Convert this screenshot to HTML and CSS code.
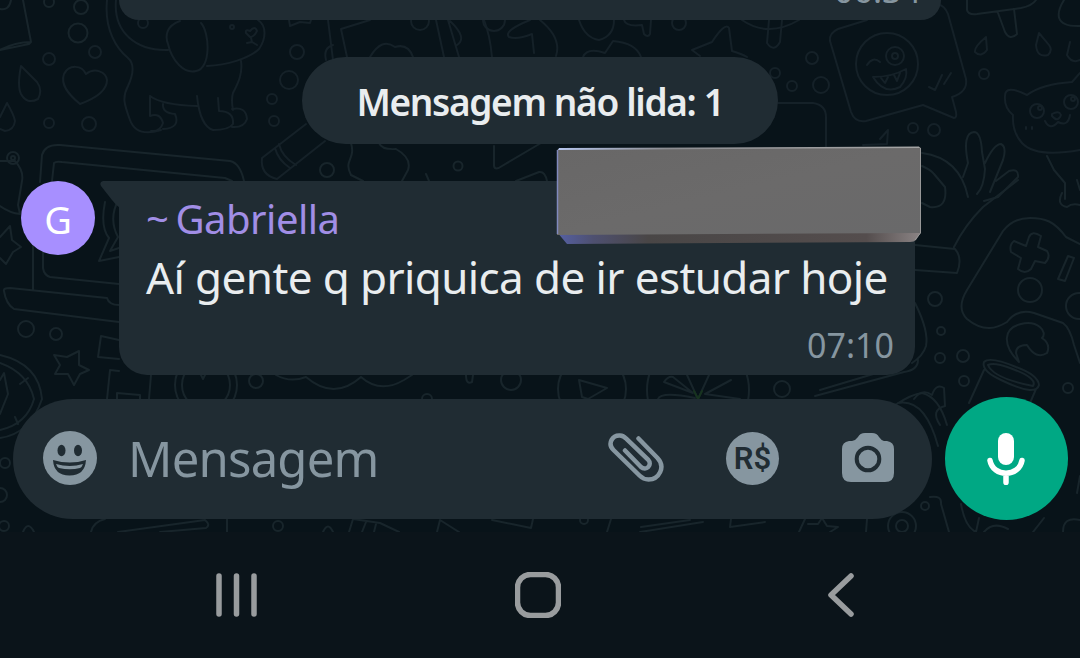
FILE: index.html
```
<!DOCTYPE html>
<html lang="pt-BR">
<head>
    <meta charset="utf-8">
    <title>Conversa</title>
    <link rel="stylesheet" href="styles.css">
</head>
<body>
    <div class="chat">
        <svg class="doodles" viewBox="0 0 1080 532" width="1080" height="532">
            <!-- top left: card, bubbles, drops, heart -->
            <path d="M23 0 L31 42 Q15 42 0 50 M31 42 L29 44 L0 50 M0 9 Q9 11 11 0"/>
            <circle cx="49" cy="2" r="5"/><circle cx="81" cy="7" r="7"/><circle cx="78" cy="33" r="9.500"/>
            <g class="faint">
                <circle cx="95" cy="52" r="6"/><circle cx="49" cy="59" r="6"/><circle cx="49" cy="123" r="5"/><circle cx="89" cy="124" r="7"/>
                <path d="M21 66 Q17 86 21 94 Q27 105 38 99 Q43 90 37 82 Z M7 103 L0 117 M7 103 Q14 115 15 121 Q14 130 5 131 L0 129"/>
                <path d="M80 104 C69 95 60 85 64 74 C69 64 82 65 86 74 C95 67 106 72 107 80 C107 93 91 100 80 104 Z"/>
                <!-- dog -->
                <path d="M107 0 C104 30 117 49 128 58 C135 64 133 75 128 86 C122 97 124 104 130 120 C135 134 148 134 161 130"/>
                <path d="M116 0 C113 33 137 51 168 50 M180 21 C166 26 165 36 168 44 C172 61 184 74 196 71 C211 69 210 33 201 23 M207 66 C226 65 249 59 259 49 C266 39 267 26 258 20 M241 61 C243 75 237 85 233 93 Q231 99 233 110"/>
                <path d="M150 96 Q162 105 197 106 M150 96 L150 116 Q160 112 163 123 Q160 132 151 131 M163 104 Q162 113 175 114 Q181 128 163 129 M197 96 C199 116 205 128 213 130 Q229 130 233 124 Q234 111 219 111 L218 98 M232 109 Q246 106 247 119 Q244 128 232 127"/>
                <path d="M246 33 Q245 29 250 31 Q255 25 257 31 Q254 37 250 37 Z M251 38 L252 42 L247 43 M252 42 L257 45"/>
                <circle cx="143" cy="23" r="5"/><circle cx="232" cy="27" r="2"/>
                <circle cx="297" cy="52" r="7"/><circle cx="289" cy="80" r="9"/><circle cx="272" cy="99" r="5"/><circle cx="274" cy="121" r="5"/>
                <path d="M289 20 L290 26 L300 22 L310 23 L312 17 M333 60 L328 20 M370 20 L341 29 L347 57 M326 60 Q323 48 333 45"/>
                <path d="M306 124 L262 158 Q260 175 277 179 L325 141 M275 148 Q278 160 290 168 M279 144 Q282 157 296 165"/>
            </g>
            <!-- between the first bubble and the pill -->
            <g class="faint">
                <path d="M370 57 Q382 37 395 47 Q408 43 413 57 M436 20 L444 57 M448 20 L459 57 M450 21 Q468 38 457 45 M484 20 Q490 35 492 57 M530 20 Q503 31 509 37 Q517 40 532 34 L534 53 M540 20 Q562 38 556 56"/>
                <path d="M579 20 Q585 38 599 40 Q614 36 614 20 M624 20 Q626 27 642 25 L644 34 Q648 38 650 34 L651 20 M583 57 Q587 47 605 53 L613 41 Q636 43 641 57"/>
                <path d="M692 50 L712 42 Q725 22 729 28 L732 51 Q742 54 747 57 M692 50 L700 56"/>
                <circle cx="420" cy="21" r="9"/><circle cx="494" cy="20" r="11"/><circle cx="679" cy="23" r="7"/>
                <path d="M742 20 Q768 38 799 20 M769 20 L767 43 Q774 53 780 42 L782 20"/>
            </g>
            <g>
                <circle cx="327" cy="170" r="7"/><circle cx="458" cy="166" r="4.500"/>
                <path d="M351 143 C356 160 343 160 351 175 L363 181 M379 143 Q382 150 396 149 Q412 158 408 170 L402 181 M494 146 L494 166 Q495 171 502 166 L541 143 M426 174 L429 181 M516 181 L539 172 Q545 171 547 181"/>
            </g>
            <!-- top right: winking sticker -->
            <g class="faint">
                <path d="M867 20 L838 29 Q829 33 830 41 L851 112 Q855 123 866 121 L923 105 L954 118 Q957 118 956 112 L952 97 Q968 92 966 79 L948 14 Q944 4 937 5"/>
                <circle cx="887" cy="64" r="31"/><circle cx="895" cy="56" r="9"/><circle cx="895" cy="56" r="3"/>
                <path d="M867 65 Q873 56 880 62 M873 77 Q892 77 906 69 Q908 78 900 87 Q884 95 873 77 M881 78 L885 83 L888 77 M894 75 L897 81 L900 73 M929 87 L935 90 L942 75 M944 84 L951 73"/>
                <circle cx="812" cy="58" r="6"/><circle cx="821" cy="85" r="8"/><circle cx="792" cy="86" r="5"/><circle cx="775" cy="73" r="5"/><circle cx="984" cy="74" r="5"/><circle cx="913" cy="128" r="5"/><circle cx="934" cy="130" r="6"/>
                <path d="M778 103 L813 103 Q826 105 826 117 L826 147 M863 145 L887 144 L888 130 L880 139"/>
                <path d="M986 37 Q974 47 975 52 Q981 58 987 50 Z M1039 33 L1036 45 Q1037 58 1048 55 Q1053 50 1049 45 Z M1070 42 L1067 55 Q1072 64 1080 60"/>
                <!-- bear -->
                <path d="M1027 95 Q1005 84 1005 96 Q1004 108 1013 115 Q1012 132 1022 143 Q1036 158 1080 150 M1027 95 Q1042 84 1072 82 L1080 73"/>
                <circle cx="1037" cy="111" r="7"/><circle cx="1040" cy="108" r="2"/><circle cx="1071" cy="102" r="7"/><circle cx="1073" cy="99" r="2"/>
                <path d="M1052 114 Q1059 110 1061 115 Q1058 123 1052 116 Z M1045 121 Q1050 131 1058 122 Q1068 127 1070 115 M1026 127 L1026 129 M1032 127 L1032 129"/>
            </g>
            <path d="M967 0 L967 10 Q968 15 977 14 L1021 8 Q1032 6 1036 0 M998 13 L1005 32 Q1010 41 1017 34 L1014 9 M1064 0 C1056 13 1054 27 1080 26"/>
            <!-- hand and headphones -->
            <path d="M922 153 Q960 158 968 197 M922 166 Q931 170 934 174 L945 187 Q948 209 930 207 L922 203 M963 177 L968 163 Q962 133 974 132 Q981 132 982 152 L985 169 Q984 187 977 194 M985 163 Q994 144 1001 144 Q1007 147 1003 160 L990 192 M996 181 L1009 171 Q1019 168 1018 177 L998 197 L984 201 M1047 156 L1054 170 L1065 183 L1065 199 M1062 193 Q1056 205 1067 207 Q1072 203 1080 205 M1077 180 L1080 190"/>
            <path d="M1018 180 L983 207 Q965 225 954 247 M915 245 L955 249 Q963 258 957 273 L915 270"/>
            <!-- game controller -->
            <path d="M1080 244 L1066 237 C1054 221 1045 218 1030 218 Q1013 218 1003 231 L967 290 Q956 308 967 319 C984 333 997 328 1007 322 Q1018 308 1034 313 L1063 323 Q1070 328 1074 345 L1080 363"/>
            <path d="M1029 237 Q1032 230 1041 236 L1038 247 L1047 251 Q1051 257 1045 263 L1035 261 L1031 269 Q1025 275 1018 269 L1021 258 L1011 252 Q1009 245 1014 241 L1026 246 Z M1068 256 L1074 258 L1065 281 L1058 279 Z"/>
            <circle cx="1030" cy="290" r="12"/><circle cx="1079" cy="306" r="13"/>
            <circle cx="935" cy="299" r="7"/><circle cx="941" cy="331" r="4"/><circle cx="940" cy="358" r="5"/><circle cx="963" cy="356" r="6"/><circle cx="964" cy="381" r="5"/><circle cx="1068" cy="388" r="5"/>
            <path d="M1019 362 C1002 345 1003 328 1021 324 C1038 320 1048 332 1042 338 Q1051 344 1047 353 Q1036 360 1027 345 Q1016 345 1016 353 Z"/>
            <path d="M984 362 Q981 371 1001 380 Q1036 397 1039 385 Q1038 375 1016 367 Q990 356 984 362 Z M988 365 Q993 378 1033 386 Q1038 378 1010 368 Q994 362 988 365 M984 370 L969 403 M1036 389 L1030 403"/>
            <path d="M915 303 Q929 331 926 346 Q923 356 912 363 M918 360 Q918 370 904 372 L815 396 M820 390 L900 366 M914 399 Q922 388 932 395 Q936 383 944 388 L945 406 Q930 410 940 425"/>
            <!-- left: laptop, star, clock -->
            <path d="M40 182 L42 155 Q45 144 60 145 L230 161 Q240 163 244 181 M52 181 L54 163 Q56 161 62 162 L225 178 L232 181"/>
            <path d="M0 161 L15 161 Q24 171 22 181 L18 205 L20 214 Q10 213 0 206"/><circle cx="13" cy="158" r="6"/><circle cx="13" cy="158" r="2"/>
            <path d="M0 237 L10 226 L12 240 L21 247 L13 252 L6 264 L0 258 M33 224 L33 290 M43 250 L43 268 Q44 275 50 277 L119 284 M4 291 Q3 288 10 288 L107 298 Q109 305 119 305 M4 291 Q6 304 14 309 L119 322 M105 202 Q100 227 109 238 L99 261 L119 257 M119 199 Q108 218 118 237 L110 251 L119 248"/>
            <circle cx="26" cy="329" r="8"/><circle cx="56" cy="334" r="6"/>
            <path d="M79 351 L79 365 L89 370 L80 374 L74 385 L68 374 L55 374 L60 365 L54 355 L67 357 Z M119 340 L101 336 L98 357 L119 359 M119 371 L110 370 L107 399 M151 375 L149 399"/>
            <path d="M0 355 Q39 364 42 399 Q30 434 0 438 M0 363 Q28 373 34 399 Q27 424 0 430 M0 380 L4 373 L8 394 L0 414 M20 384 L28 378 M15 417 L18 424"/>
            <circle cx="206" cy="385" r="31"/><circle cx="206" cy="385" r="24"/><circle cx="256" cy="381" r="7"/>
            <path d="M117 399 L117 393 L140 395 L140 399 M201 375 L203 379 L205 375 M276 375 Q290 383 306 377 Q334 401 361 377 Q380 394 404 380 L412 375"/>
            <!-- strip above the composer -->
            <circle cx="427" cy="399" r="5"/><circle cx="511" cy="380" r="10"/><circle cx="592" cy="389" r="34"/><circle cx="698" cy="390" r="51"/><circle cx="782" cy="389" r="8"/>
            <path d="M466 375 Q466 385 472 382 L473 375 M579 380 L607 388 L588 399 L582 397 Z M664 382 Q668 376 673 377 L693 393 L664 382 M658 399 Q661 391 695 398 M731 380 L705 394 L740 399"/>
            <path d="M687 375 L698 399 L709 375"/>
            <path class="green" d="M694 391 L698 399 L702 391"/>
            <!-- right edge and strip below the composer -->
            <path d="M895 405 Q912 394 922 393 Q939 397 947 425 M898 403 Q925 398 938 446 M930 497 Q942 495 941 504 L949 532 M961 504 Q965 527 976 532 L979 518 M984 532 Q993 521 1008 529 M1044 518 L1033 532 M1063 532 Q1063 516 1080 520 M1080 476 L1077 493"/>
            <circle cx="5" cy="463" r="5"/><circle cx="0" cy="495" r="7"/><circle cx="4" cy="526" r="5"/><circle cx="278" cy="526" r="5"/><circle cx="925" cy="506" r="4"/><circle cx="902" cy="526" r="14"/><circle cx="902" cy="526" r="6"/><circle cx="584" cy="520" r="4"/>
            <path d="M23 532 Q28 520 34 532 M91 532 Q93 522 105 519 M118 532 L205 520 Q211 525 206 528 L160 532 M227 519 L227 532 M323 532 Q328 521 333 532 M349 532 L353 519 L380 523 L399 532 M362 532 L366 522 M374 532 L376 524 M437 532 L440 520 L459 532 M492 520 L531 528 L533 519 M607 532 L611 519 M641 527 L690 520 M640 532 L703 522 M731 519 L730 527 L765 522 M799 532 L805 519 M808 524 L818 524 L822 518 L827 526 L838 527 L830 532 M866 532 L867 519"/>
        </svg>

        <div class="bubble previous">
            <span class="time">06:34</span>
        </div>

        <div class="unread">Mensagem não lida: 1</div>

        <div class="message">
            <div class="avatar">G</div>
            <div class="bubble">
                <svg class="tail" viewBox="0 0 19 26" width="19" height="26"><path d="M19 0 H3 Q-1 1 1 5 L12 19 Q17 25 19 26 Z"/></svg>
                <div class="sender"><span class="tilde">~</span>Gabriella</div>
                <div class="text">Aí gente q priquica de ir estudar hoje</div>
                <span class="time">07:10</span>
                <!-- block hiding the phone number -->
                <svg class="cover" viewBox="0 0 366 98" width="366" height="98">
                    <defs>
                        <linearGradient id="face" x1="0" y1="0" x2="1" y2="1">
                            <stop offset="0" stop-color="#686767"/>
                            <stop offset=".5" stop-color="#6b6a6a"/>
                            <stop offset="1" stop-color="#69696a"/>
                        </linearGradient>
                        <linearGradient id="edge">
                            <stop offset="0" stop-color="#5560a4"/>
                            <stop offset=".1" stop-color="#4e5070"/>
                            <stop offset=".25" stop-color="#494646"/>
                            <stop offset=".85" stop-color="#544d4d"/>
                            <stop offset="1" stop-color="#8b8485"/>
                        </linearGradient>
                        <linearGradient id="rim">
                            <stop offset="0" stop-color="#b6c6ee"/>
                            <stop offset=".3" stop-color="#8c8d91"/>
                            <stop offset="1" stop-color="#a5a5a5"/>
                        </linearGradient>
                    </defs>
                    <path fill="url(#edge)" d="M1 86 L11 98 L354 96 Q358 96 360 94 L365 86 Z"/>
                    <path fill="url(#face)" d="M3 3 L363 1 Q365 1 365 3 L365 87 L1 89 V5 Q1 3 3 3 Z"/>
                    <path fill="none" stroke="#8089bd" stroke-width="1.500" d="M1.500 4 V88"/>
                    <path fill="none" stroke="#989898" d="M364.500 2 V87 L359 94"/>
                    <path fill="url(#rim)" d="M3 2 L363 .5 L364 2 L2 4 Z"/>
                </svg>
            </div>
        </div>

        <div class="footer">
            <div class="composer">
                <svg class="emoji" viewBox="0 0 54 54" width="54" height="54">
                    <circle cx="27" cy="27" r="27" fill="#8696a0"/>
                    <g fill="#202c33">
                        <ellipse cx="18.500" cy="19.500" rx="4" ry="5.700"/>
                        <ellipse cx="35" cy="19.500" rx="4" ry="5.700"/>
                        <path d="M10 29 Q27 34 43 29 Q42 44.500 26.500 44.500 Q11 44.500 10 29 Z"/>
                    </g>
                    <path fill="#8696a0" d="M13 33 Q27 37 40 33 Q39 36 37 37 Q27 39.500 16 37 Q14 36 13 33 Z"/>
                </svg>
                <span class="placeholder">Mensagem</span>
                <svg class="clip" viewBox="0 0 56 50" width="56" height="50">
                    <path d="M30.500 5.500 L49.500 25 C58 34 51 46.500 40.500 46.500 Q35.500 46.500 31.500 42.500 L5.500 17 C-1 10.500 4.500 2 12 2.500 Q15.500 2.700 18 5.500 L40 26.500 C45 32 38 38.500 33 34 L17 17.500"/>
                </svg>
                <span class="money">R$</span>
                <svg class="camera" viewBox="0 0 52 49" width="52" height="49">
                    <path fill="#8696a0" d="M7 8 H10 Q14 7 16 4 Q18 0 23 0 H30 Q35 0 37 4 Q39 7 42 8 H45 Q52 9 52 16 V40 Q52 49 43 49 H9 Q0 49 0 40 V16 Q0 9 7 8 Z"/>
                    <circle cx="26" cy="26" r="11.300" fill="none" stroke="#202c33" stroke-width="4"/>
                </svg>
            </div>
            <div class="mic">
                <svg viewBox="0 0 38 52" width="38" height="52">
                    <rect x="11" y="0" width="16" height="32" rx="8" fill="#fff"/>
                    <path d="M3 27.500 C6 44.500 32 44.500 35 27.500 M19 41 V49.500"/>
                </svg>
            </div>
        </div>
    </div>

    <div class="navbar">
        <svg viewBox="0 0 42 44" width="42" height="44"><path d="M3 3 V41 M20.500 3 V41 M38 3 V41"/></svg>
        <svg class="home" viewBox="0 0 46 46" width="46" height="46"><rect x="2.500" y="2.500" width="41" height="41" rx="13"/></svg>
        <svg viewBox="0 0 28 44" width="28" height="44"><path d="M24 3 L4 22 L24 41"/></svg>
    </div>
</body>
</html>
```
FILE: styles.css
```
* {
    box-sizing: border-box;
}

body {
    margin: 0;
    width: 1080px;
    height: 658px;
    overflow: hidden;
    font-family: "Noto Sans", "Open Sans", sans-serif;
    background-color: #0b141a;
}

svg {
    display: block;
    flex: none;
}

.chat {
    position: relative;
    height: 532px;
    overflow: hidden;
    background-color: #081319;
}

.doodles {
    position: absolute;
    top: 0;
    left: 0;
    fill: none;
    stroke: #18252b;
    stroke-width: 2;
    stroke-linecap: round;
    stroke-linejoin: round;
}

.doodles .faint {
    stroke: #152128;
}

.doodles .green {
    stroke: #17331f;
}

.bubble {
    position: relative;
    width: 796px;
    height: 194px;
    padding: 14px 21px 0 27px;
    border-radius: 0 28px 28px 28px;
    background-color: #202c33;
    white-space: nowrap;
}

.previous {
    display: flex;
    justify-content: flex-end;
    align-items: flex-end;
    width: 822px;
    height: 20px;
    margin-left: 119px;
    padding: 0 20px 10px 0;
    border-radius: 0 0 28px 28px;
}

.time {
    display: block;
    font-size: 34px;
    line-height: 40px;
    text-align: right;
    color: #8696a0;
}

.unread {
    position: relative;
    width: 476px;
    height: 87px;
    margin: 37px auto;
    border-radius: 44px;
    background-color: #202c33;
    color: #e9edef;
    font-size: 37px;
    font-weight: 600;
    letter-spacing: -1.35px;
    line-height: 89px;
    text-align: center;
    white-space: nowrap;
}

.message {
    display: flex;
    gap: 24px;
    padding-left: 21px;
}

.avatar {
    position: relative;
    width: 74px;
    height: 74px;
    border-radius: 50%;
    background-color: #a78fff;
    color: #fff;
    font-size: 38px;
    line-height: 77px;
    text-align: center;
}

.tail {
    position: absolute;
    top: 0;
    left: -19px;
    fill: #202c33;
}

.sender {
    height: 48px;
    color: #a18ee6;
    font-size: 40px;
    letter-spacing: -0.5px;
    line-height: 47px;
}

.tilde {
    margin-right: 7px;
}

.text {
    height: 70px;
    color: #e9edef;
    font-size: 44px;
    letter-spacing: -0.6px;
    line-height: 69px;
}

.bubble .text + .time {
    margin-top: 12px;
}

.cover {
    position: absolute;
    top: -35px;
    left: 437px;
}

.footer {
    position: relative;
    display: flex;
    align-items: center;
    gap: 13px;
    height: 123px;
    margin-top: 22px;
    padding-left: 13px;
}

.composer {
    display: flex;
    align-items: center;
    width: 919px;
    height: 120px;
    padding: 0 38px 1px 30px;
    border-radius: 60px;
    background-color: #202c33;
}

.placeholder {
    width: 481px;
    margin-left: 31px;
    color: #8696a0;
    font-size: 49px;
    letter-spacing: -0.8px;
    line-height: 120px;
}

.clip {
    margin-right: 62px;
    fill: none;
    stroke: #8696a0;
    stroke-width: 4.5;
    stroke-linecap: round;
}

.money {
    width: 53px;
    height: 53px;
    margin-right: 63px;
    border-radius: 50%;
    background-color: #8696a0;
    color: #202c33;
    font-family: Roboto, sans-serif;
    font-size: 31px;
    font-weight: 600;
    line-height: 54px;
    text-align: center;
}

.camera {
    margin-bottom: 2px;
}

.mic {
    display: flex;
    align-items: center;
    justify-content: center;
    width: 123px;
    height: 123px;
    padding-right: 1px;
    border-radius: 50%;
    background-color: #00a884;
}

.mic path {
    fill: none;
    stroke: #fff;
    stroke-width: 5.5;
    stroke-linecap: round;
}

.navbar {
    display: flex;
    align-items: center;
    justify-content: space-between;
    height: 126px;
    padding: 0 225px 1px 216px;
    fill: none;
    stroke: #999c9e;
    stroke-width: 5.5;
    stroke-linecap: round;
    stroke-linejoin: round;
}

.home {
    margin-right: 9px;
}
```
